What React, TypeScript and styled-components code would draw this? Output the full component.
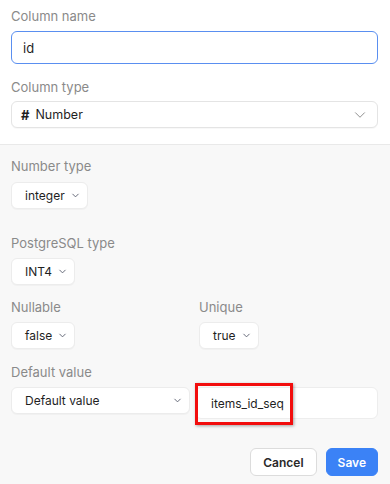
import styled, { createGlobalStyle } from 'styled-components';
import { ChevronDown } from 'lucide-react';

const GlobalStyle = createGlobalStyle`
  html, body {
    margin: 0;
    padding: 0;
    background: #f8f8f8;
    font-family: Inter, "Noto Sans", sans-serif;
    -webkit-font-smoothing: antialiased;
  }
`;

const Panel = styled.div`
  width: 390px;
  height: 484px;
  display: flex;
  flex-direction: column;
  overflow: hidden;
`;

const TopSection = styled.section`
  background: #ffffff;
  padding: 8px 12px 16px 11px;
  display: flex;
  flex-direction: column;
  gap: 15px;
  border-bottom: 1px solid #e9e9e9;
`;

const Details = styled.section`
  flex: 1;
  background: #f8f8f8;
  padding: 13px 12px 0 11px;
  display: flex;
  flex-direction: column;
`;

const Field = styled.div<{ $after?: number; $gap?: number }>`
  display: flex;
  flex-direction: column;
  gap: ${(p) => p.$gap ?? 7}px;
  margin-bottom: ${(p) => p.$after ?? 0}px;
  min-width: 0;
`;

const Label = styled.label`
  font-size: 13px;
  line-height: 16px;
  color: #8a8a8a;
`;

const TextInput = styled.div`
  height: 33px;
  box-sizing: border-box;
  border: 1px solid #5a8ff0;
  border-radius: 6px;
  background: #fff;
  padding: 0 11px;
  display: flex;
  align-items: center;
  font-size: 13px;
  color: #1f1f1f;
`;

const WideSelect = styled.div`
  height: 27px;
  box-sizing: border-box;
  border: 1px solid #e4e4e4;
  border-radius: 6px;
  background: #fff;
  padding: 0 8px 0 9px;
  display: flex;
  align-items: center;
  gap: 6px;
  font-size: 12.5px;
  color: #1f1f1f;
  box-shadow: 0 1px 1px rgba(0, 0, 0, 0.03);

  svg {
    flex-shrink: 0;
  }
`;

const Hash = styled.span`
  font-weight: 700;
  font-size: 13px;
`;

const Grow = styled.span`
  flex: 1;
`;

const Chip = styled.div<{ $width?: number }>`
  width: ${(p) => (p.$width ? `${p.$width}px` : 'auto')};
  align-self: flex-start;
  height: 27px;
  box-sizing: border-box;
  border: 1px solid #ececec;
  border-radius: 6px;
  background: #fff;
  padding: 0 6px 0 13px;
  display: flex;
  align-items: center;
  justify-content: space-between;
  gap: 5px;
  font-size: 12px;
  color: #1f1f1f;
  white-space: nowrap;
  box-shadow: 0 1px 1px rgba(0, 0, 0, 0.03);

  svg {
    flex-shrink: 0;
  }
`;

const PairRow = styled.div`
  display: grid;
  grid-template-columns: 1fr 1fr;
  column-gap: 9px;
  margin-bottom: 15px;
`;

const DefaultRow = styled.div`
  display: flex;
  align-items: flex-start;
  gap: 5px;
`;

const SeqInputWrap = styled.div`
  position: relative;
  flex: 1;
`;

const SeqInput = styled.div`
  height: 32px;
  box-sizing: border-box;
  border: 1px solid #ededed;
  border-radius: 6px;
  background: #fff;
  padding: 0 15px;
  display: flex;
  align-items: center;
  font-size: 12px;
  color: #1f1f1f;
`;

const Highlight = styled.div`
  position: absolute;
  left: 0;
  top: -4px;
  width: 98px;
  height: 42px;
  box-sizing: border-box;
  border: 3px solid #f20d0d;
  box-shadow: 1px 1px 3px rgba(0, 0, 0, 0.35);
  pointer-events: none;
`;

const Actions = styled.div`
  display: flex;
  justify-content: flex-end;
  gap: 9px;
  margin-top: 29px;
`;

const Button = styled.button<{ $primary?: boolean }>`
  height: 28px;
  box-sizing: border-box;
  padding: 0 ${(p) => (p.$primary ? 11 : 12)}px;
  border-radius: 6px;
  font-family: inherit;
  font-size: 12px;
  font-weight: 600;
  border: 1px solid ${(p) => (p.$primary ? '#3b82f6' : '#dcdcdc')};
  background: ${(p) => (p.$primary ? '#3b82f6' : '#ffffff')};
  color: ${(p) => (p.$primary ? '#ffffff' : '#2a2a2a')};
`;

const SmallChevron = () => <ChevronDown size={11} strokeWidth={2} color="#5a5f6e" />;

export default function App() {
  return (
    <Panel>
      <GlobalStyle />
      <TopSection>
        <Field>
          <Label>Column name</Label>
          <TextInput>id</TextInput>
        </Field>
        <Field $gap={6}>
          <Label>Column type</Label>
          <WideSelect>
            <Hash>#</Hash>
            <Grow>Number</Grow>
            <ChevronDown size={18} strokeWidth={1.1} color="#777" />
          </WideSelect>
        </Field>
      </TopSection>

      <Details>
        <Field $after={26} $gap={8}>
          <Label>Number type</Label>
          <Chip>
            integer
            <SmallChevron />
          </Chip>
        </Field>
        <Field $after={14}>
          <Label>PostgreSQL type</Label>
          <Chip>
            INT4
            <SmallChevron />
          </Chip>
        </Field>
        <PairRow>
          <Field>
            <Label>Nullable</Label>
            <Chip>
              false
              <SmallChevron />
            </Chip>
          </Field>
          <Field>
            <Label>Unique</Label>
            <Chip>
              true
              <SmallChevron />
            </Chip>
          </Field>
        </PairRow>
        <Field>
          <Label>Default value</Label>
          <DefaultRow>
            <Chip $width={179}>
              Default value
              <SmallChevron />
            </Chip>
            <SeqInputWrap>
              <SeqInput>items_id_seq</SeqInput>
              <Highlight />
            </SeqInputWrap>
          </DefaultRow>
        </Field>
        <Actions>
          <Button>Cancel</Button>
          <Button $primary>Save</Button>
        </Actions>
      </Details>
    </Panel>
  );
}
